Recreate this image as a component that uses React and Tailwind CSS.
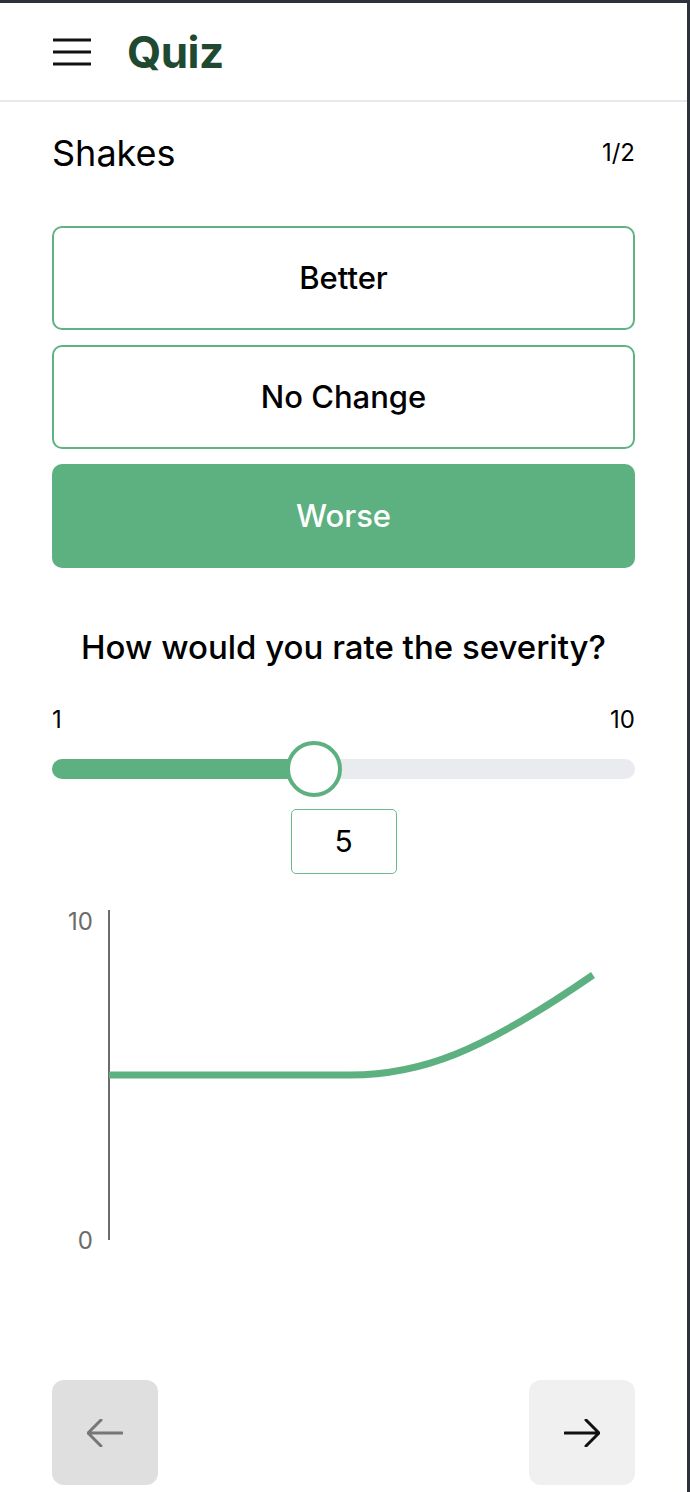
import React, { useState } from 'react';

const GREEN = '#5db180';

// Severity history shown under the slider
const points = 'M1,165 L242,165 C312,165 372,143 485,65';

function Hamburger() {
  return (
    <svg width="40" height="30" viewBox="0 0 40 30" className="shrink-0">
      <path d="M1 3H39M1 15H39M1 27H39" stroke="#111" strokeWidth="3" />
    </svg>
  );
}

function Arrow({ dir = 'right', color = '#111' }) {
  const d = dir === 'right' ? 'M1 14H35M22 1L35 14L22 27' : 'M35 14H1M14 1L1 14L14 27';
  return (
    <svg width="36" height="28" viewBox="0 0 36 28">
      <path d={d} stroke={color} strokeWidth="3" fill="none" strokeLinecap="round" strokeLinejoin="round" />
    </svg>
  );
}

export default function App() {
  const [choice, setChoice] = useState('Worse');
  const [value] = useState(5);
  const options = ['Better', 'No Change', 'Worse'];
  const pct = (value - 1) / 9;

  return (
    <div
      className="w-[690px] h-[1492px] bg-white border-t-[3px] border-r-[3px] border-[#2c313c] overflow-hidden text-black"
      style={{ fontFamily: 'Inter, "Noto Sans", sans-serif' }}
    >
      {/* Header */}
      <div className="h-[99px] flex items-center gap-[35px] px-[52px] border-b-2 border-[#e7e8eb]">
        <Hamburger />
        <h1 className="text-[44px] font-bold text-[#1f4a31] leading-none tracking-[-0.5px]">Quiz</h1>
      </div>

      <div className="px-[52px]">
        {/* Symptom title */}
        <div className="flex items-center justify-between mt-[31px] h-[40px]">
          <span className="text-[36px] leading-none">Shakes</span>
          <span className="text-[24px] leading-none">1/2</span>
        </div>

        {/* Options */}
        <div className="flex flex-col gap-[15px] mt-[53px]">
          {options.map((o) => {
            const on = choice === o;
            return (
              <button
                key={o}
                onClick={() => setChoice(o)}
                className={`h-[104px] rounded-[10px] text-[31px] font-medium ${
                  on ? 'bg-[#5db180] text-white' : 'border-2 border-[#5fb282] bg-white text-black'
                }`}
              >
                {o}
              </button>
            );
          })}
        </div>

        {/* Severity */}
        <p className="text-center text-[33px] font-medium mt-[63px] leading-none">
          How would you rate the severity?
        </p>
        <div className="flex justify-between text-[24px] leading-none mt-[44px]">
          <span>1</span>
          <span>10</span>
        </div>
        <div className="relative h-[20px] rounded-full bg-[#e9ebee] mt-[27px]">
          <div
            className="h-full rounded-l-full bg-[#5db180]"
            style={{ width: `calc(28px + ${pct} * (100% - 56px))` }}
          />
          <div
            className="absolute top-1/2 w-[56px] h-[56px] -translate-y-1/2 rounded-full bg-white border-[4px] border-[#5db180]"
            style={{ left: `calc(${pct} * (100% - 56px))` }}
          />
        </div>
        <div className="flex justify-center mt-[30px]">
          <div className="w-[106px] h-[65px] flex items-center justify-center border border-[#6dbb8d] rounded-[5px] text-[30px]">
            {value}
          </div>
        </div>

        {/* History chart */}
        <div className="flex mt-[36px] h-[330px]">
          <div className="w-[56px] pr-[15px] flex flex-col justify-between items-end text-[24px] text-[#6b6b6b] leading-none">
            <span>10</span>
            <span className="-mb-[13px]">0</span>
          </div>
          <svg width="527" height="330" viewBox="0 0 527 330">
            <line x1="1" y1="0" x2="1" y2="330" stroke="#6b6b6b" strokeWidth="2" />
            <path d={points} stroke={GREEN} strokeWidth="7" fill="none" />
          </svg>
        </div>

        {/* Navigation */}
        <div className="flex justify-between mt-[140px]">
          <button className="w-[106px] h-[105px] rounded-[12px] bg-[#dfdfdf] flex items-center justify-center">
            <Arrow dir="left" color="#777" />
          </button>
          <button className="w-[106px] h-[105px] rounded-[12px] bg-[#f0f0f0] flex items-center justify-center">
            <Arrow dir="right" color="#111" />
          </button>
        </div>
      </div>
    </div>
  );
}
